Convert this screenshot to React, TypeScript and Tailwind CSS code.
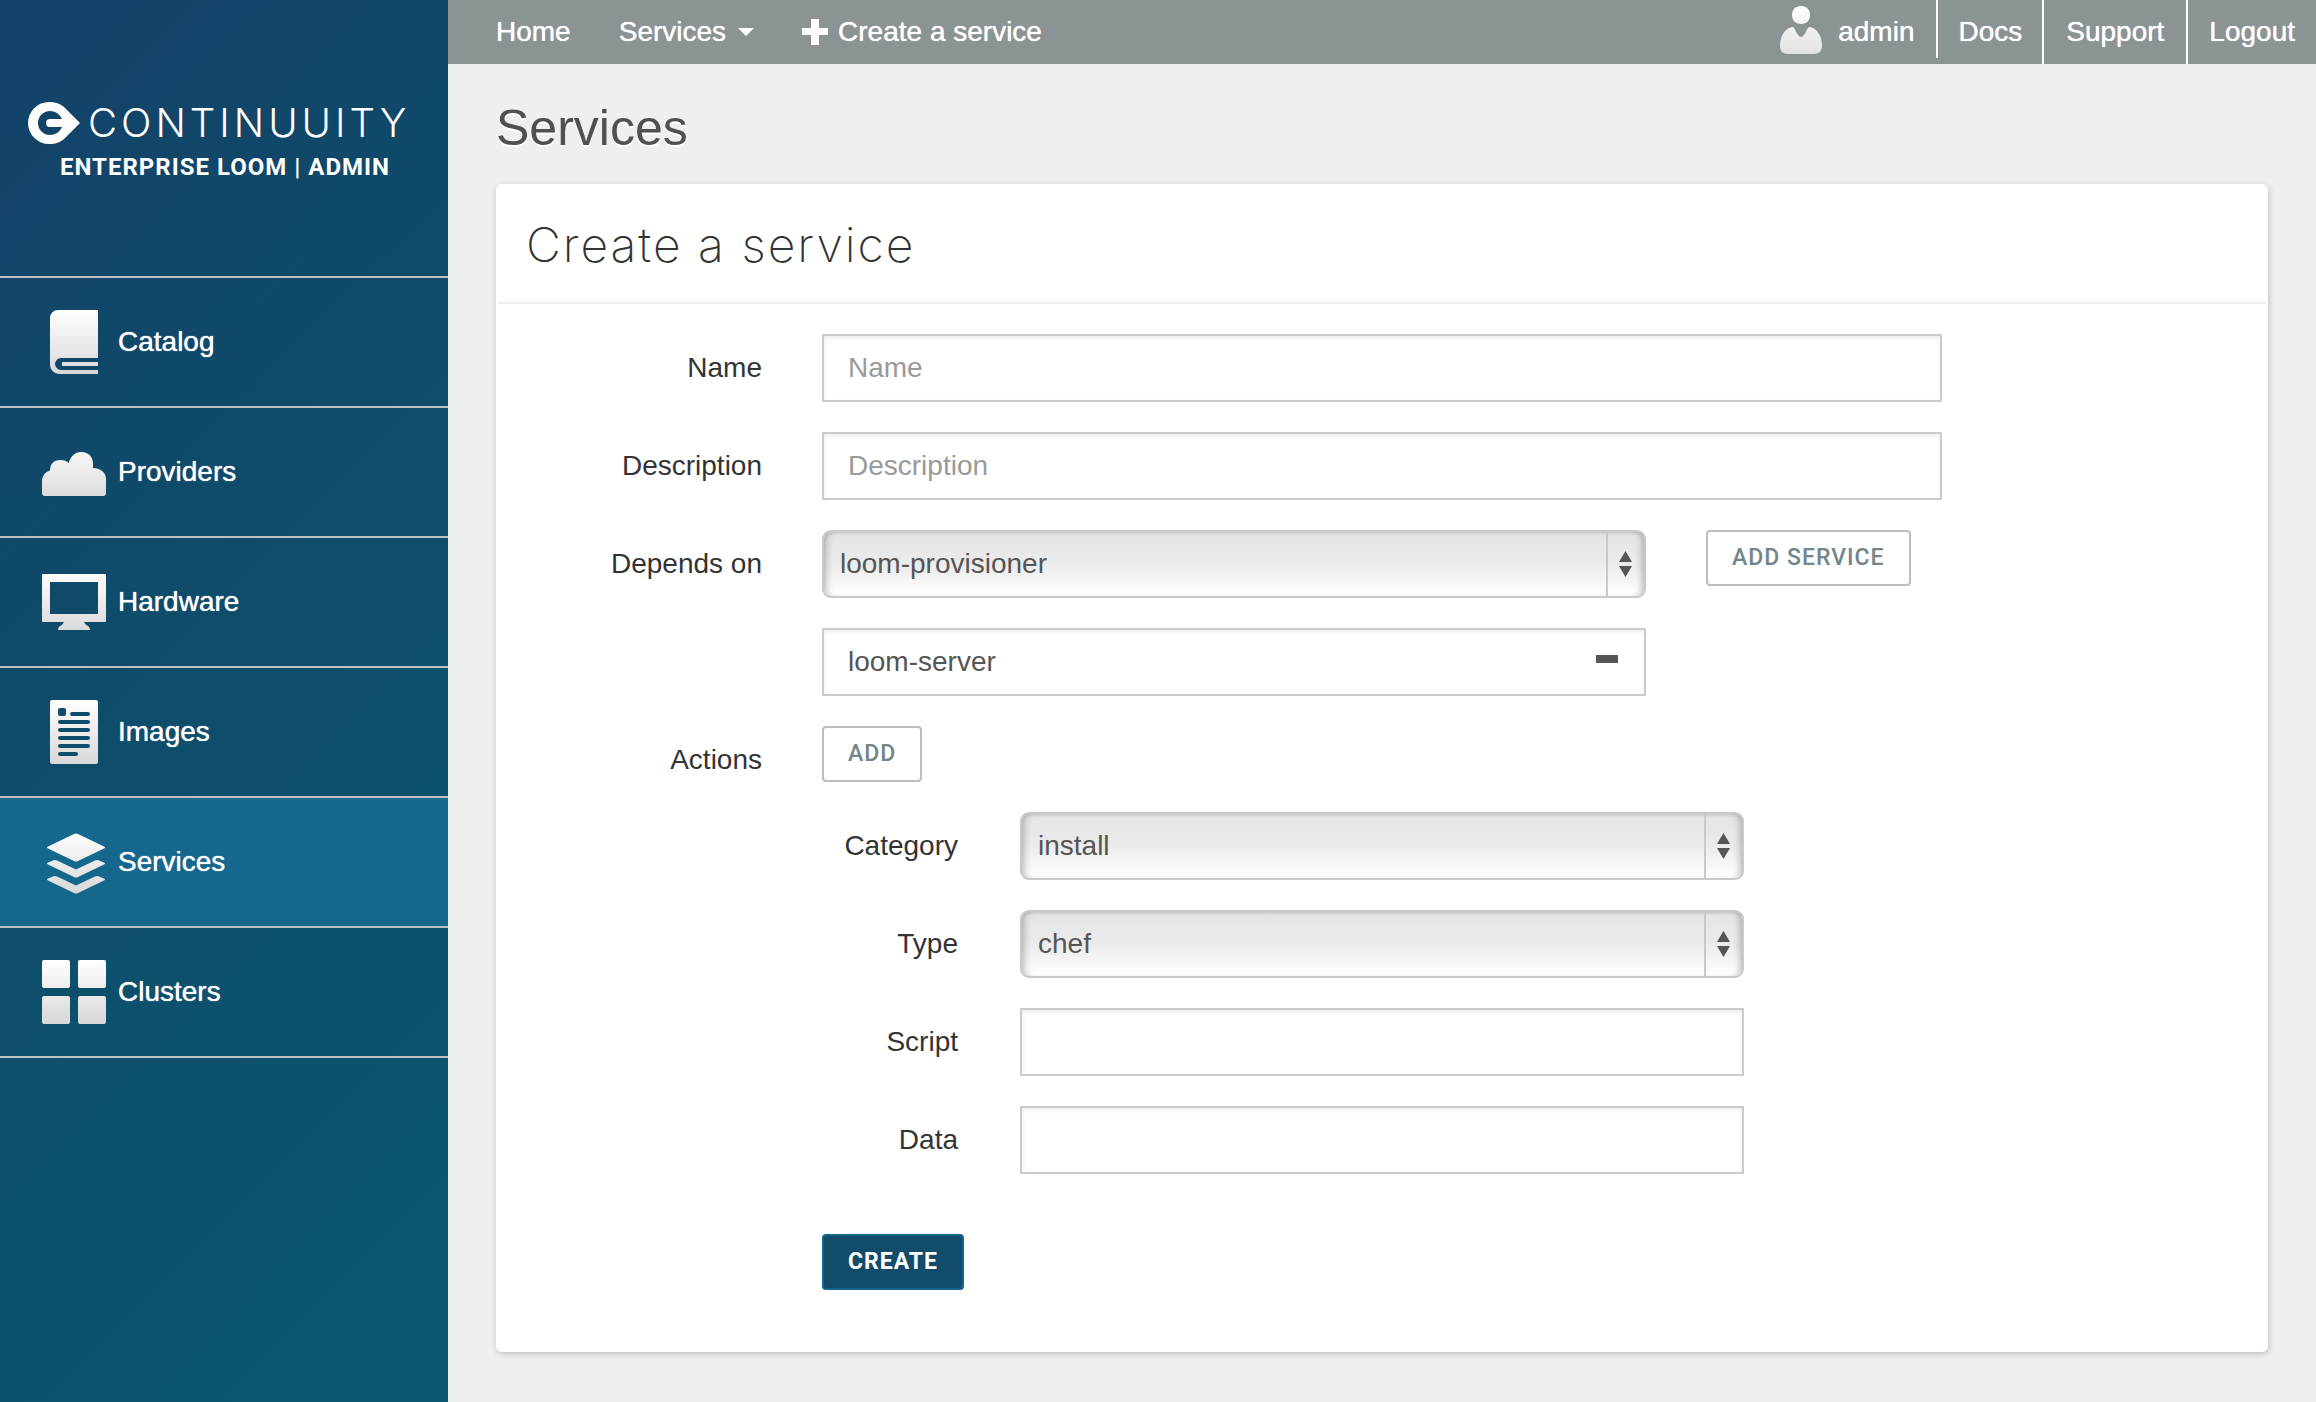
import { useState } from "react";
import type { ReactNode, SelectHTMLAttributes, InputHTMLAttributes, ButtonHTMLAttributes } from "react";

const FILL = "url(#icon-fade)";

function IconDefs() {
  return (
    <svg width="0" height="0" className="absolute" aria-hidden="true">
      <defs>
        <linearGradient id="icon-fade" x1="0" y1="0" x2="0" y2="64" gradientUnits="userSpaceOnUse">
          <stop offset="0" stopColor="#ffffff" />
          <stop offset="1" stopColor="#d8d8d8" />
        </linearGradient>
      </defs>
    </svg>
  );
}

function Icon({ children }: { children: ReactNode }) {
  return (
    <svg viewBox="0 0 64 64" className="size-16 shrink-0" fill={FILL} aria-hidden="true">
      {children}
    </svg>
  );
}

const BookIcon = () => (
  <Icon>
    <path d="M16 0H56V48H20a6 6 0 0 0-6 3q-2 3 0 6a6 6 0 0 0 6 3H56v4H17a9 9 0 0 1-9-9V8a8 8 0 0 1 8-8Z" />
    <path d="M20 52H56v4H20Z" />
  </Icon>
);

const CloudIcon = () => (
  <Icon>
    <path d="M3 56a3 3 0 0 1-3-3V41c0-5 3-9 8-10.500C8 24 12 20 18 20c4 0 7 1 8.500 3C29 16 33 12 39 12c8 0 12 5 12 12v4c7 0 13 4 13 11v14a3 3 0 0 1-3 3Z" />
  </Icon>
);

const MonitorIcon = () => (
  <Icon>
    <path
      fillRule="evenodd"
      d="M1 4H63a1 1 0 0 1 1 1V51a1 1 0 0 1-1 1H42c1 2 2 3 4 4q2 1 2 4H16q0-3 2-4c2-1 3-2 4-4H1a1 1 0 0 1-1-1V5a1 1 0 0 1 1-1ZM8 12V44H56V12Z"
    />
  </Icon>
);

const PageIcon = () => (
  <Icon>
    <path
      fillRule="evenodd"
      d="M10 0H54a2 2 0 0 1 2 2V62a2 2 0 0 1-2 2H10a2 2 0 0 1-2-2V2a2 2 0 0 1 2-2ZM18 8a2 2 0 0 0-2 2v4a2 2 0 0 0 2 2h4a2 2 0 0 0 2-2v-4a2 2 0 0 0-2-2ZM30 12a2 2 0 0 0 0 4H46a2 2 0 0 0 0-4ZM18 20a2 2 0 0 0 0 4H46a2 2 0 0 0 0-4ZM18 28a2 2 0 0 0 0 4H46a2 2 0 0 0 0-4ZM18 36a2 2 0 0 0 0 4H46a2 2 0 0 0 0-4ZM18 44a2 2 0 0 0 0 4H46a2 2 0 0 0 0-4ZM18 52a2 2 0 0 0 0 4H34a2 2 0 0 0 0-4Z"
    />
  </Icon>
);

const LayersIcon = () => (
  <Icon>
    <path d="M32 4q2-1 4 0L62 16.500q2 1 0 2L36 31q-2 1-4 0L6 18.500q-2-1 0-2Z" />
    <path d="M10 31q2-1.500 5-.5L34 39.500 53 30.500q3-1 5 .5L62 32.500q2 1 0 2L36 47q-2 1-4 0L6 34.500q-2-1 0-2Z" />
    <path d="M10 47q2-1.500 5-.5L34 55.500 53 46.500q3-1 5 .5L62 48.500q2 1 0 2L36 63q-2 1-4 0L6 50.500q-2-1 0-2Z" />
  </Icon>
);

const GridIcon = () => (
  <Icon>
    <rect x="0" y="0" width="28" height="28" rx="2" />
    <rect x="36" y="0" width="28" height="28" rx="2" />
    <rect x="0" y="36" width="28" height="28" rx="2" />
    <rect x="36" y="36" width="28" height="28" rx="2" />
  </Icon>
);

const UserIcon = () => (
  <svg viewBox="0 0 42 48" className="h-12 w-[42px]" fill={FILL} aria-hidden="true">
    <path d="M21 0c6 0 9 4 9 9s-3 9-9 9-9-4-9-9 3-9 9-9Z" />
    <path d="M12 21c2 0 3 2 4 5q3 5 5 5t5-5c1-3 2-5 4-5 8 2 12 10 12 19 0 5-3 8-8 8H8c-5 0-8-3-8-8 0-9 4-17 12-19Z" />
  </svg>
);

const SECTIONS = [
  { label: "Catalog", icon: <BookIcon /> },
  { label: "Providers", icon: <CloudIcon /> },
  { label: "Hardware", icon: <MonitorIcon /> },
  { label: "Images", icon: <PageIcon /> },
  { label: "Services", icon: <LayersIcon />, active: true },
  { label: "Clusters", icon: <GridIcon /> },
];

function Sidebar() {
  return (
    <aside className="w-[448px] shrink-0 bg-[linear-gradient(135deg,#134268,#09596f)] text-white">
      <a href="#" className="flex h-[276px] flex-col px-7 pt-[102px]">
        <span className="flex items-center gap-2">
          <svg viewBox="0 0 52 42" className="h-[42px] w-[52px] shrink-0" aria-hidden="true">
            <path
              fill="#fff"
              fillRule="evenodd"
              d="M21 0C28 0 33 2 37 6L52 21 37 36C33 40 28 42 21 42A21 21 0 0 1 21 0ZM34 17C32 12 27 9 22 9a12 12 0 1 0 0 24c5 0 10-3 12-8H22a4 4 0 0 1 0-8Z"
            />
          </svg>
          <span className="font-[Inter,sans-serif] text-[40px] leading-[42px] font-light tracking-[4px]">CONTINUUITY</span>
        </span>
        <span className="pt-[7px] pl-8 font-[Roboto,sans-serif] text-[24px] leading-8 font-bold tracking-[1px] whitespace-nowrap">
          ENTERPRISE LOOM | ADMIN
        </span>
      </a>
      <nav className="border-b-2 border-[#bfc0c2]">
        {SECTIONS.map((s) => (
          <a
            key={s.label}
            href="#"
            className={
              s.active
                ? "flex h-[130px] items-center gap-3 border-t-2 border-[#bfc0c2] bg-[#15678d] pl-[42px]"
                : "flex h-[130px] items-center gap-3 border-t-2 border-[#bfc0c2] pl-[42px]"
            }
          >
            {s.icon}
            <span className="[text-shadow:0_0_1px_#fff]">{s.label}</span>
          </a>
        ))}
      </nav>
    </aside>
  );
}

function TopBar() {
  return (
    <header className="flex h-16 justify-between bg-[#8b9394] pl-12 text-white [text-shadow:0_0_1px_#fff]">
      <nav className="flex items-center gap-12">
        <a href="#">Home</a>
        <button type="button" className="flex items-center gap-3 [text-shadow:0_0_1px_#fff]">
          Services
          <svg viewBox="0 0 16 8" className="h-2 w-4" fill="#fff" aria-hidden="true">
            <path d="M0 0H16L8 8Z" />
          </svg>
        </button>
        <a href="#" className="flex items-center gap-[10px]">
          <svg viewBox="0 0 26 26" className="size-[26px]" fill="#fff" aria-hidden="true">
            <path d="M9 0H17V9H26V16H17V26H9V16H0V9H9Z" />
          </svg>
          Create a service
        </a>
      </nav>
      <nav className="flex items-start">
        <a href="#" className="flex h-[58px] items-start gap-4 border-r-2 border-white pt-[6px] pr-[22px] leading-[52px]">
          <UserIcon />
          admin
        </a>
        <a href="#" className="flex h-16 items-center border-r-2 border-white px-5">Docs</a>
        <a href="#" className="flex h-16 items-center border-r-2 border-white px-[22px]">Support</a>
        <a href="#" className="flex h-16 items-center px-[21px]">Logout</a>
      </nav>
    </header>
  );
}

function TextField(props: InputHTMLAttributes<HTMLInputElement>) {
  return (
    <input
      type="text"
      className="h-[68px] w-full border-2 border-[#ccc] bg-white px-6 text-[#555] shadow-[inset_0_2px_4px_rgba(0,0,0,0.08)] placeholder:text-[#999]"
      {...props}
    />
  );
}

function SelectField(props: SelectHTMLAttributes<HTMLSelectElement>) {
  return (
    <div className="relative">
      <select
        className="h-[68px] w-full appearance-none rounded-[9px] border-2 border-[#c9c9c9] bg-linear-to-b from-[#e4e4e4] via-[#ebebeb] to-white px-4 text-[#555] shadow-[inset_7px_0_6px_-4px_rgba(0,0,0,0.2),inset_-7px_0_6px_-4px_rgba(0,0,0,0.2),inset_0_2px_3px_rgba(0,0,0,0.08)]"
        {...props}
      />
      <span className="pointer-events-none absolute inset-y-[2px] right-0 flex w-10 items-center justify-center border-l-2 border-[#c9c9c9] pr-1">
        <svg viewBox="0 0 13 26" className="h-[26px] w-[13px]" fill="#555" aria-hidden="true">
          <path d="M6.500 0 13 11H0ZM0 15H13L6.500 26Z" />
        </svg>
      </span>
    </div>
  );
}

function Button({ primary, ...props }: ButtonHTMLAttributes<HTMLButtonElement> & { primary?: boolean }) {
  return (
    <button
      type="button"
      className={
        primary
          ? "h-14 justify-self-start rounded border-2 border-[#156489] bg-[#114d6a] px-6 font-[Roboto,sans-serif] text-[23px] font-bold tracking-[1px] whitespace-nowrap text-white"
          : "h-14 justify-self-start rounded border-2 border-[#bdbdbd] bg-white px-6 font-[Roboto,sans-serif] text-[23px] font-medium tracking-[1px] whitespace-nowrap text-[#73868c]"
      }
      {...props}
    />
  );
}

function Label({ htmlFor, children }: { htmlFor?: string; children: ReactNode }) {
  return (
    <label htmlFor={htmlFor} className="text-right leading-[68px] whitespace-nowrap text-[#333]">
      {children}
    </label>
  );
}

const ROW = "grid grid-cols-[264fr_1120fr_264fr] gap-x-[60px]";
const SUBROW = "grid grid-cols-[136fr_724fr_136fr] gap-x-[62px]";

function ServiceForm() {
  const [dependencies, setDependencies] = useState(["loom-server"]);
  return (
    <form className="flex flex-col gap-[30px] px-[2px] pt-[30px] pb-[62px]">
      <div className={ROW}>
        <Label htmlFor="name">Name</Label>
        <TextField id="name" placeholder="Name" />
      </div>
      <div className={ROW}>
        <Label htmlFor="description">Description</Label>
        <TextField id="description" placeholder="Description" />
      </div>
      <div className={ROW}>
        <Label htmlFor="depends">Depends on</Label>
        <div className="grid grid-cols-[824fr_236fr] gap-x-[60px] gap-y-[30px]">
          <SelectField id="depends" defaultValue="loom-provisioner">
            <option>loom-provisioner</option>
            <option>loom-server</option>
          </SelectField>
          <Button>ADD SERVICE</Button>
          {dependencies.map((name) => (
            <div
              key={name}
              className="col-start-1 flex h-[68px] items-center border-2 border-[#ccc] pl-6 pr-[26px] shadow-[inset_0_2px_4px_rgba(0,0,0,0.08)]"
            >
              <input readOnly aria-label="Dependency" value={name} className="min-w-0 flex-1 bg-transparent text-[#555] outline-none" />
              <button
                type="button"
                aria-label={`Remove ${name}`}
                className="pb-[6px]"
                onClick={() => setDependencies(dependencies.filter((d) => d !== name))}
              >
                <svg viewBox="0 0 22 8" className="h-2 w-[22px]" fill="#555" aria-hidden="true">
                  <rect width="22" height="8" />
                </svg>
              </button>
            </div>
          ))}
        </div>
      </div>
      <div className={ROW}>
        <Label>Actions</Label>
        <div className="flex flex-col gap-[30px]">
          <div className="flex">
            <Button>ADD</Button>
          </div>
          <div className={SUBROW}>
            <Label htmlFor="category">Category</Label>
            <SelectField id="category" defaultValue="install">
              <option>install</option>
            </SelectField>
          </div>
          <div className={SUBROW}>
            <Label htmlFor="type">Type</Label>
            <SelectField id="type" defaultValue="chef">
              <option>chef</option>
            </SelectField>
          </div>
          <div className={SUBROW}>
            <Label htmlFor="script">Script</Label>
            <TextField id="script" />
          </div>
          <div className={SUBROW}>
            <Label htmlFor="data">Data</Label>
            <TextField id="data" />
          </div>
          <div className="flex pt-[30px]">
            <Button primary>CREATE</Button>
          </div>
        </div>
      </div>
    </form>
  );
}

export default function App() {
  return (
    <div className="flex min-h-screen bg-[#eef0f0] font-['Liberation_Sans',Arial,sans-serif] text-[28px] leading-10">
      <IconDefs />
      <Sidebar />
      <div className="min-w-0 flex-1">
        <TopBar />
        <main className="px-12 pt-8 pb-12">
          <h1 className="mb-6 text-[50px] leading-16 text-[#505050] [text-shadow:0_2px_0_#fff]">Services</h1>
          <section className="rounded-md bg-white shadow-[1px_2px_6px_rgba(0,0,0,0.2)]">
            <h2 className="mx-[2px] flex h-[120px] items-center border-b-2 border-[#eee] px-7 pt-1 font-[Inter,sans-serif] text-[48px] font-extralight tracking-[2px] text-[#333]">
              Create a service
            </h2>
            <ServiceForm />
          </section>
        </main>
      </div>
    </div>
  );
}
